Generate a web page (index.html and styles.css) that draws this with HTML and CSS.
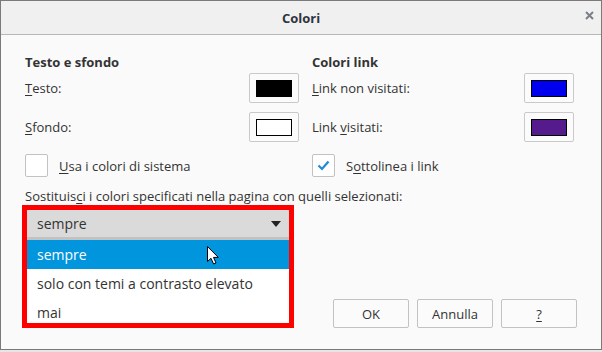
FILE: index.html
```html
<!DOCTYPE html>
<html lang="it">
<head>
    <meta charset="UTF-8">
    <title>Colori</title>
    <link rel="stylesheet" href="styles.css">
</head>
<body>
    <div class="finestra">
        <div class="barra-titolo">
            <span class="titolo">Colori</span>
            <svg class="chiudi" width="9" height="9" viewBox="0 0 9 9">
                <path d="M1 1 L8 8 M8 1 L1 8" stroke="#7b8087" stroke-width="2"/>
            </svg>
        </div>

        <div class="contenuto">
            <div class="colonne">
                <div class="colonna">
                    <div class="intestazione">Testo e sfondo</div>
                    <div class="riga">
                        <span><u>T</u>esto:</span>
                        <button class="bottone-colore"><span class="campione campione-nero"></span></button>
                    </div>
                    <div class="riga">
                        <span><u>S</u>fondo:</span>
                        <button class="bottone-colore"><span class="campione campione-bianco"></span></button>
                    </div>
                    <div class="riga-check">
                        <span class="casella"></span>
                        <span><u>U</u>sa i colori di sistema</span>
                    </div>
                </div>
                <div class="colonna">
                    <div class="intestazione">Colori link</div>
                    <div class="riga">
                        <span><u>L</u>ink non visitati:</span>
                        <button class="bottone-colore"><span class="campione campione-blu"></span></button>
                    </div>
                    <div class="riga">
                        <span>Link <u>v</u>isitati:</span>
                        <button class="bottone-colore"><span class="campione campione-viola"></span></button>
                    </div>
                    <div class="riga-check">
                        <span class="casella">
                            <svg width="21" height="21" viewBox="0 0 21 21">
                                <path d="M5.5 10.5 L9 14 L15.5 6.5" fill="none" stroke="#1f8ad8" stroke-width="2.2"/>
                            </svg>
                        </span>
                        <span>S<u>o</u>ttolinea i link</span>
                    </div>
                </div>
            </div>

            <div class="sostituisci">Sostituis<u>c</u>i i colori specificati nella pagina con quelli selezionati:</div>

            <div class="parte-bassa">
                <div class="evidenziato">
                    <div class="selezione">
                        <span>sempre</span>
                        <svg width="10" height="6" viewBox="0 0 10 6">
                            <path d="M0 0 H10 L5 6 Z" fill="#222"/>
                        </svg>
                    </div>
                    <div class="lista">
                        <div class="voce voce-attiva">sempre</div>
                        <div class="voce">solo con temi a contrasto elevato</div>
                        <div class="voce">mai</div>
                    </div>
                    <svg class="puntatore" width="13" height="19" viewBox="0 0 13 19">
                        <path d="M0.5 0.5 L0.5 15.5 L4 12.3 L6.6 18 L9 17 L6.5 11.4 L11.3 11.4 Z" fill="#fff" stroke="#000" stroke-width="1"/>
                    </svg>
                </div>

                <div class="bottoni">
                    <button class="bottone">OK</button>
                    <button class="bottone">Annulla</button>
                    <button class="bottone"><u>?</u></button>
                </div>
            </div>
        </div>
    </div>
</body>
</html>
```

FILE: styles.css
```css
body {
    margin: 0;
    background-color: #e6e6e6;
    font-family: "Open Sans", "Noto Sans", sans-serif;
    font-size: 13px;
    color: #333;
}

u {
    text-decoration-thickness: 1px;
    text-underline-offset: 2px;
}

.finestra {
    box-sizing: border-box;
    width: 602px;
    height: 350px;
    border: 1px solid #7a7a7a;
    background-color: #fafafa;
    display: flex;
    flex-direction: column;
}

.barra-titolo {
    position: relative;
    height: 33px;
    background-color: #f0f0f0;
    border-bottom: 1px solid #b8b8b8;
    display: flex;
    align-items: center;
    justify-content: center;
}

.titolo {
    font-weight: bold;
    font-size: 13px;
    color: #2e3440;
}

.chiudi {
    position: absolute;
    right: 7px;
    top: 10px;
}

.contenuto {
    padding: 18px 24px 0 24px;
    display: flex;
    flex-direction: column;
}

.colonne {
    display: grid;
    grid-template-columns: 274px 262px;
    column-gap: 13px;
}

.colonna {
    display: flex;
    flex-direction: column;
}

.intestazione {
    font-weight: bold;
    line-height: 18px;
    height: 20px;
}

.riga {
    display: flex;
    justify-content: space-between;
    align-items: center;
    height: 30px;
    margin-bottom: 9px;
}

.bottone-colore {
    box-sizing: border-box;
    width: 50px;
    height: 30px;
    padding: 0;
    border: 1px solid #c9c9c9;
    border-radius: 2px;
    background-color: #fbfbfb;
    display: flex;
    align-items: center;
    justify-content: center;
}

.campione {
    box-sizing: border-box;
    width: 36px;
    height: 17px;
    border: 1px solid #000;
}

.campione-nero { background-color: #000; }
.campione-bianco { background-color: #fff; }
.campione-blu { background-color: #0000ee; }
.campione-viola { background-color: #551a8b; }

.riga-check {
    display: flex;
    align-items: center;
    gap: 11px;
    margin-top: 3px;
}

.casella {
    box-sizing: border-box;
    width: 23px;
    height: 23px;
    border: 1px solid #c2c2c2;
    border-radius: 2px;
    background-color: #fff;
    display: flex;
}

.sostituisci {
    margin-top: 10px;
    line-height: 18px;
}

.parte-bassa {
    display: flex;
    justify-content: space-between;
    align-items: flex-end;
}

.evidenziato {
    position: relative;
    box-sizing: border-box;
    width: 272px;
    height: 123px;
    margin-left: -3px;
    border: 5px solid #ff0000;
    background-color: #fff;
    overflow: hidden;
    font-size: 14px;
}

.selezione {
    height: 27px;
    background-color: #dadada;
    border-bottom: 3px solid #c2c2c2;
    display: flex;
    align-items: center;
    justify-content: space-between;
    padding: 0 8px 0 10px;
}

.voce {
    height: 29px;
    line-height: 29px;
    padding-left: 10px;
}

.voce-attiva {
    background-color: #0095dd;
    color: #fff;
}

.puntatore {
    position: absolute;
    left: 180px;
    top: 36px;
}

.bottoni {
    display: flex;
    gap: 8px;
}

.bottone {
    box-sizing: border-box;
    width: 76px;
    height: 29px;
    border: 1px solid #c2c2c2;
    border-radius: 2px;
    background-color: #fbfbfb;
    font-family: inherit;
    font-size: 13px;
    color: #333;
}
```
